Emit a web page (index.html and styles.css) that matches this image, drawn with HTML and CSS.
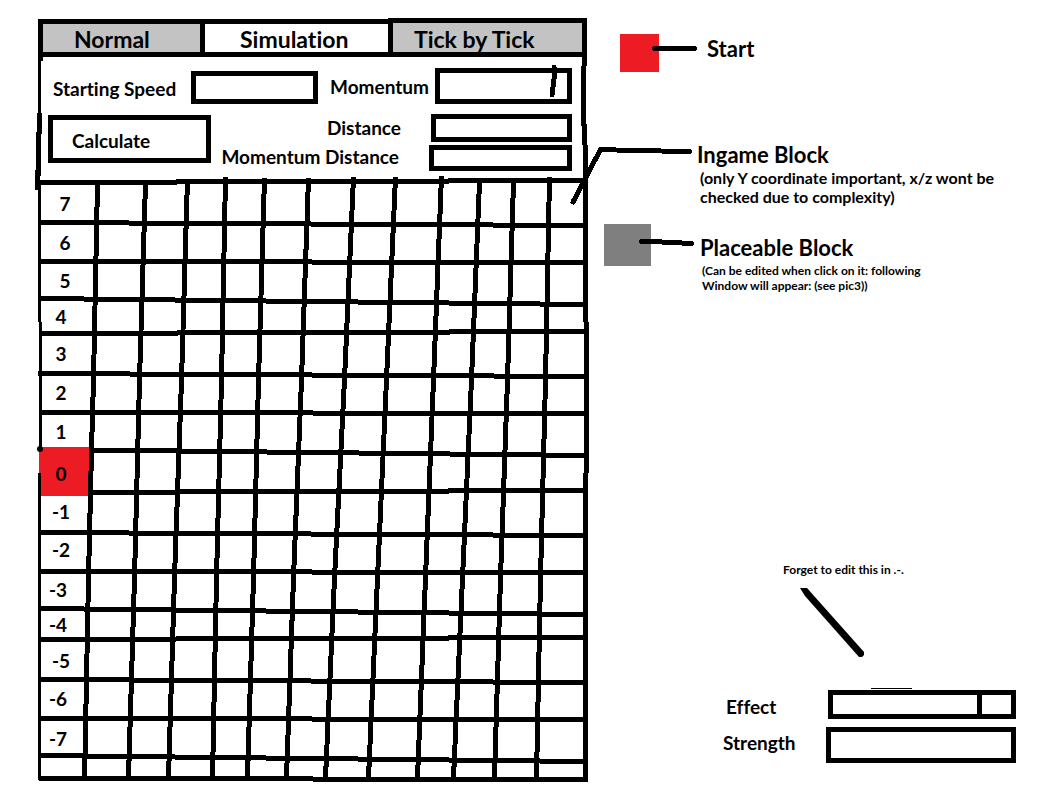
FILE: index.html
```html
<!DOCTYPE html>
<html lang="en">
<head>
<meta charset="utf-8">
<title>Simulation</title>
<link rel="stylesheet" href="styles.css">
</head>
<body>
<main class="sheet">
  <section class="panel">
    <nav class="tabs">
      <button class="tab tab-normal" type="button">Normal</button>
      <button class="tab tab-simulation" type="button">Simulation</button>
      <button class="tab tab-tick" type="button">Tick by Tick</button>
    </nav>
    <div class="workspace">
      <svg class="drawing" viewBox="38 57 549 725" preserveAspectRatio="none" aria-hidden="true">
        <path class="start-cell" d="M39 447H90L88 496H39Z"/>
        <path class="thin" d="M39.500 57V113M39.500 184V322M40.500 322V448M39.500 473V780"/>
        <path class="line" d="M40.500 52V61M39.500 113V134M38.500 132V176M37.500 170V190"/>
        <path class="line" d="M584.500 52V66M583.500 66V126M584.500 124V145M585.500 145V322M586.500 322V473M585.500 473V780"/>
        <path class="line" d="M40 182.500H177M176 181.500H449M448 180.500H586
          M38 222.500H129M129 223.500H311M311 224.500H493M493 225.500H586
          M40 261.500H312M312 262.500H586
          M38 298.500H84M84 299.500H175M175 300.500H266M266 301.500H358M358 302.500H449M449 303.500H540M540 304.500H586
          M40 333.500H178M177 332.500H450M449 331.500H586
          M38 373.500H130M130 374.500H312M312 375.500H494M494 376.500H586
          M40 412.500H313M313 413.500H586
          M90 450.500H178M178 451.500H267M267 452.500H359M359 453.500H450M450 454.500H545M545 455.500H586
          M88 492.500H178M178 491.500H449M448 490.500H586
          M38 532.500H129M129 533.500H311M311 534.500H493M493 535.500H586
          M39 571.500H312M312 572.500H586
          M38 608.500H84M84 609.500H176M176 610.500H266M266 611.500H358M358 612.500H449M449 613.500H540M540 614.500H586
          M39 639.500H176M176 638.500H449M448 637.500H586
          M38 679.500H133M133 680.500H311M311 681.500H493M493 682.500H586
          M39 718.500H312M312 719.500H586
          M38 755.500H87M87 756.500H175M175 757.500H266M266 758.500H358M358 759.500H449M449 760.500H540M540 761.500H586
          M39 778.500H313M313 779.500H588"/>
        <path class="line" d="M97.500 183L93.500 380L91.500 450L88.500 578L84.500 781
          M145.500 183L139.500 380L134.500 578L128.500 778
          M187.500 179L181.500 380L174.500 578L168.500 778
          M225.500 177L221.500 380L216.500 578L212.500 778
          M264.500 178L258.500 380L253.500 578L247.500 778
          M308.500 178L301.500 380L293.500 578L286.500 778
          M353.500 177L344.500 380L334.500 578L325.500 778
          M395.500 177L386.500 380L377.500 578L368.500 778
          M441.500 176L433.500 380L425.500 578L417.500 778
          M479.500 182L471.500 380L462.500 578L453.500 778
          M513.500 182L507.500 380L500.500 578L494.500 778
          M549.500 177L545.500 380L540.500 578L536.500 778"/>
        <circle cx="40" cy="449" r="3"/>
      </svg>
      <form class="settings">
        <div class="row row-top">
          <label class="speed-label" for="speed">Starting Speed</label>
          <input class="box speed" id="speed" type="text">
          <label class="momentum-label" for="momentum">Momentum</label>
          <span class="picker">
            <select class="box momentum" id="momentum"><option></option></select>
            <svg class="picker-bar" viewBox="0 0 8 32" aria-hidden="true"><path class="line round" d="M5 2L5 14L3 30"/></svg>
          </span>
        </div>
        <div class="row row-results">
          <button class="box calculate" type="button">Calculate</button>
          <div class="results">
            <div class="result">
              <label for="distance">Distance</label>
              <input class="box distance" id="distance" type="text">
            </div>
            <div class="result">
              <label for="mdistance">Momentum Distance</label>
              <input class="box mdistance" id="mdistance" type="text">
            </div>
          </div>
        </div>
      </form>
      <ul class="levels">
        <li class="upper">7</li>
        <li class="upper">6</li>
        <li class="upper">5</li>
        <li>4</li>
        <li>3</li>
        <li>2</li>
        <li>1</li>
        <li>0</li>
        <li>-1</li>
        <li>-2</li>
        <li class="lower">-3</li>
        <li class="lower">-4</li>
        <li>-5</li>
        <li class="lower">-6</li>
        <li class="lower">-7</li>
        <li></li>
      </ul>
    </div>
  </section>

  <aside class="legend">
    <section class="entry entry-start">
      <svg class="marker marker-start" viewBox="0 0 120 54" aria-hidden="true">
        <path class="start-cell" d="M33 16H72V54H33Z"/>
        <path class="line round" d="M67.500 30.500H107.500"/>
      </svg>
      <h2>Start</h2>
    </section>
    <section class="entry entry-ingame">
      <svg class="marker marker-ingame" viewBox="0 0 110 60" aria-hidden="true">
        <path class="line round" d="M-14 60L13.500 7.500L45 8.500L102.500 9.500"/>
      </svg>
      <div>
        <h2>Ingame Block</h2>
        <p class="note">(only Y coordinate important, x/z wont be<br>checked due to complexity)</p>
      </div>
    </section>
    <section class="entry entry-placeable">
      <svg class="marker marker-placeable" viewBox="0 0 113 42" aria-hidden="true">
        <path class="grey-cell" d="M17 0H64V42H17Z"/>
        <path class="line round" d="M54.500 17.500H65L104.500 19.500"/>
      </svg>
      <div>
        <h2>Placeable Block</h2>
        <p class="hint">(Can be edited when click on it: following<br>Window will appear: (see pic3))</p>
      </div>
    </section>

    <form class="editor">
      <p class="remark">Forget to edit this in .-.</p>
      <svg class="pointer" viewBox="0 0 120 102" aria-hidden="true">
        <path d="M7 1H14L71 65V68L69 70H66L12 9Z"/>
        <path d="M78 101H119V102H78Z"/>
      </svg>
      <div class="field">
        <label for="effect">Effect</label>
        <select class="box effect" id="effect"><option></option></select>
      </div>
      <div class="field">
        <label for="strength">Strength</label>
        <input class="box strength" id="strength" type="text">
      </div>
    </form>
  </aside>
</main>
</body>
</html>
```
FILE: styles.css
```css
* {
  box-sizing: border-box;
}

body {
  margin: 0;
  background: #fff;
  color: #000;
  font: bold 19px/24px Lato, "Open Sans", sans-serif;
  font-variant-ligatures: none;
}

h2, p, ul {
  margin: 0;
  padding: 0;
}

h2 {
  font-size: 22px;
  line-height: 26px;
}

button, input, select {
  margin: 0;
  border-radius: 0;
  color: inherit;
  font: inherit;
  font-variant-ligatures: none;
}

svg {
  display: block;
  flex: none;
  overflow: visible;
}

.sheet {
  display: grid;
  grid-template-columns: minmax(0, 549fr) minmax(0, 457fr);
  padding: 18px 0 15px 38px;
}

.line, .thin {
  fill: none;
  stroke: #000;
  stroke-width: 5px;
  shape-rendering: crispEdges;
}

.thin {
  stroke-width: 3px;
}

.round {
  stroke-linecap: round;
  stroke-linejoin: round;
}

.start-cell {
  fill: #ed1c24;
}

.grey-cell {
  fill: #7f7f7f;
}

.box {
  min-width: 0;
  padding: 0;
  border: 5px solid #000;
  background: #fff;
  appearance: none;
}

/* Tabs */

.tabs {
  display: grid;
  grid-template-columns: 167fr 183fr 199fr;
}

.tab {
  height: 39px;
  padding: 2px 0 0;
  border: 5px solid #000;
  background: #c3c3c3;
  font-size: 23px;
  text-align: left;
}

.tab-normal {
  height: 38px;
  margin-top: 1px;
  padding-left: 31px;
}

.tab-simulation {
  height: 38px;
  margin-top: 1px;
  padding-left: 35px;
  border-width: 5px 0;
  background: #fff;
}

.tab-tick {
  padding-left: 21px;
}

/* Settings */

.workspace {
  position: relative;
}

.drawing {
  position: absolute;
  inset: 0;
  width: 100%;
  height: 100%;
}

.settings {
  position: relative;
  display: flex;
  flex-direction: column;
  gap: 10px;
  padding: 11px 15px 11px 10px;
}

.row {
  display: flex;
}

.row-top {
  align-items: center;
}

.speed-label {
  flex: none;
  width: 143px;
  padding: 5px 0 0 5px;
}

.speed {
  flex: 1;
  height: 33px;
  margin-top: 2px;
}

.momentum-label {
  flex: none;
  width: 117px;
  padding: 2px 0 0 12px;
}

.picker {
  position: relative;
  flex: none;
  display: flex;
}

.momentum {
  width: 137px;
  height: 36px;
}

.picker-bar {
  position: absolute;
  top: -3px;
  right: 15px;
  width: 8px;
  height: 32px;
  pointer-events: none;
}

.calculate {
  flex: none;
  width: 163px;
  height: 48px;
  margin-top: 1px;
  padding: 4px 0 0 19px;
  text-align: left;
}

.results {
  flex: 1;
  display: flex;
  flex-direction: column;
  gap: 3px;
  padding-left: 4px;
}

.result {
  display: flex;
  align-items: center;
  justify-content: flex-end;
}

.result label {
  margin-right: 30px;
}

.result:last-child label {
  margin-bottom: 2px;
}

.distance {
  width: 141px;
  height: 28px;
}

.mdistance {
  width: 143px;
  height: 26px;
}

/* Height levels */

.levels {
  position: relative;
  display: grid;
  grid-template-rows: 40fr 38fr 38fr 35fr 38fr 40fr 39fr 44fr 33fr 43fr 37fr 33fr 38fr 39fr 41fr 24fr;
  width: 46px;
  height: 600px;
  list-style: none;
  text-align: center;
}

.levels li {
  display: grid;
  place-items: center;
  padding-top: 3px;
}

.levels .upper {
  padding-left: 8px;
}

.levels .lower {
  padding-right: 6px;
}

/* Legend */

.legend {
  display: flex;
  flex-direction: column;
}

.entry {
  display: flex;
  align-items: flex-start;
  white-space: nowrap;
}

.marker-start {
  width: 120px;
  height: 54px;
}

.entry-start h2 {
  padding-top: 18px;
}

.entry-ingame {
  margin-top: 70px;
}

.marker-ingame {
  width: 110px;
  height: 60px;
}

.marker-placeable {
  width: 113px;
  height: 42px;
}

.entry-placeable {
  margin-top: 18px;
}

.entry-placeable h2 {
  padding-top: 11px;
}

.note {
  padding-left: 3px;
  font-size: 16px;
  line-height: 19px;
}

.hint, .remark {
  padding-left: 2px;
  font-size: 12px;
  line-height: 15px;
}

.hint {
  padding-top: 2px;
}

.editor {
  display: flex;
  flex-direction: column;
  gap: 8px;
  margin-top: auto;
  padding: 0 28px 19px 136px;
}

.remark {
  padding-left: 60px;
}

.pointer {
  width: 120px;
  height: 102px;
  margin: 2px 0 -8px 70px;
}

.field {
  display: flex;
  align-items: center;
  justify-content: space-between;
}

.field:first-of-type label {
  padding: 6px 0 0 3px;
}

.field:last-of-type label {
  padding-bottom: 4px;
}

.effect {
  width: 188px;
  height: 29px;
  background: #fff linear-gradient(#000, #000) no-repeat right 29px top / 5px 100%;
}

.strength {
  width: 190px;
  height: 36px;
}
```
